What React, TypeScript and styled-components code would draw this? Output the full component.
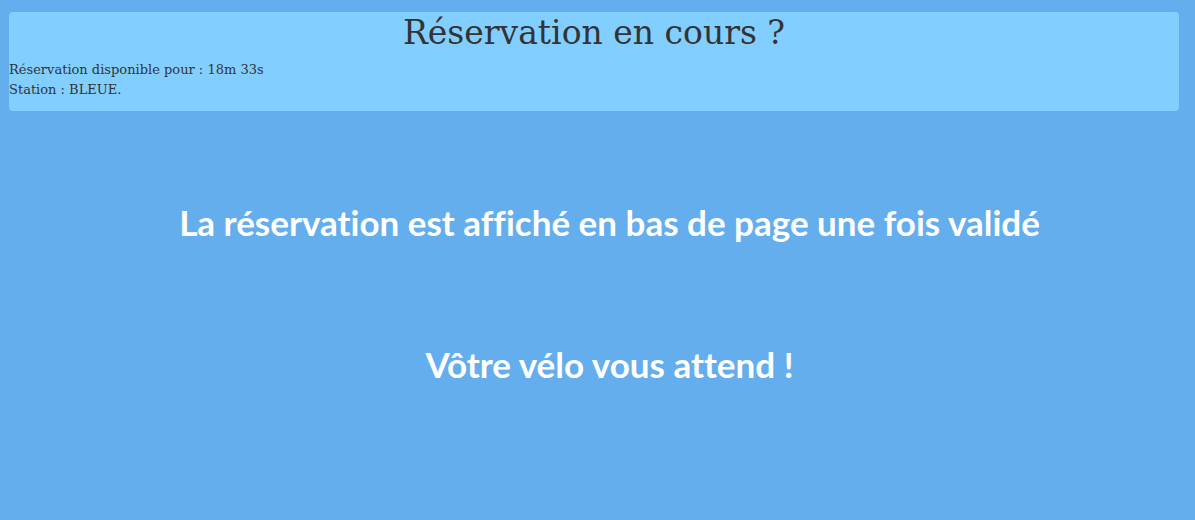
import React from "react";
import styled, { createGlobalStyle } from "styled-components";

const Global = createGlobalStyle`
  html, body { margin: 0; padding: 0; }
  body {
    background: #65aeee;
    min-height: 520px;
    font-family: "DejaVu Serif", serif;
  }
`;

const Page = styled.div`
  display: flex;
  flex-direction: column;
  padding: 12px 16px 0 9px;
`;

const Panel = styled.section`
  background: #82cfff;
  border-radius: 4px;
  height: 99px;
  color: #333333;
`;

const Title = styled.h1`
  margin: 0;
  padding-top: 2px;
  text-align: center;
  font-family: "DejaVu Serif", serif;
  font-weight: normal;
  font-size: 33px;
  line-height: 38px;
  color: #333333;
`;

const Info = styled.p`
  margin: 0;
  font-family: "DejaVu Serif", serif;
  font-size: 13px;
  line-height: 20px;
`;

const InfoBlock = styled.div`
  padding-top: 8px;
`;

const Messages = styled.div`
  display: flex;
  flex-direction: column;
  align-items: center;
  padding-left: 24px;
  margin-left: -9px;
  margin-right: -16px;
`;

const Message = styled.h2<{ $top: number }>`
  margin: ${(p) => p.$top}px 0 0;
  font-family: "Lato", "Open Sans", sans-serif;
  font-weight: bold;
  font-size: 35px;
  line-height: 40px;
  font-variant-ligatures: none;
  color: #ffffff;
  text-align: center;
`;

export default function App() {
  return (
    <>
      <Global />
      <Page>
        <Panel>
          <Title>Réservation en cours ?</Title>
          <InfoBlock>
            <Info>Réservation disponible pour : 18m 33s</Info>
            <Info>Station : BLEUE.</Info>
          </InfoBlock>
        </Panel>
        <Messages>
          <Message $top={91}>La réservation est affiché en bas de page une fois validé</Message>
          <Message $top={102}>Vôtre vélo vous attend !</Message>
        </Messages>
      </Page>
    </>
  );
}
